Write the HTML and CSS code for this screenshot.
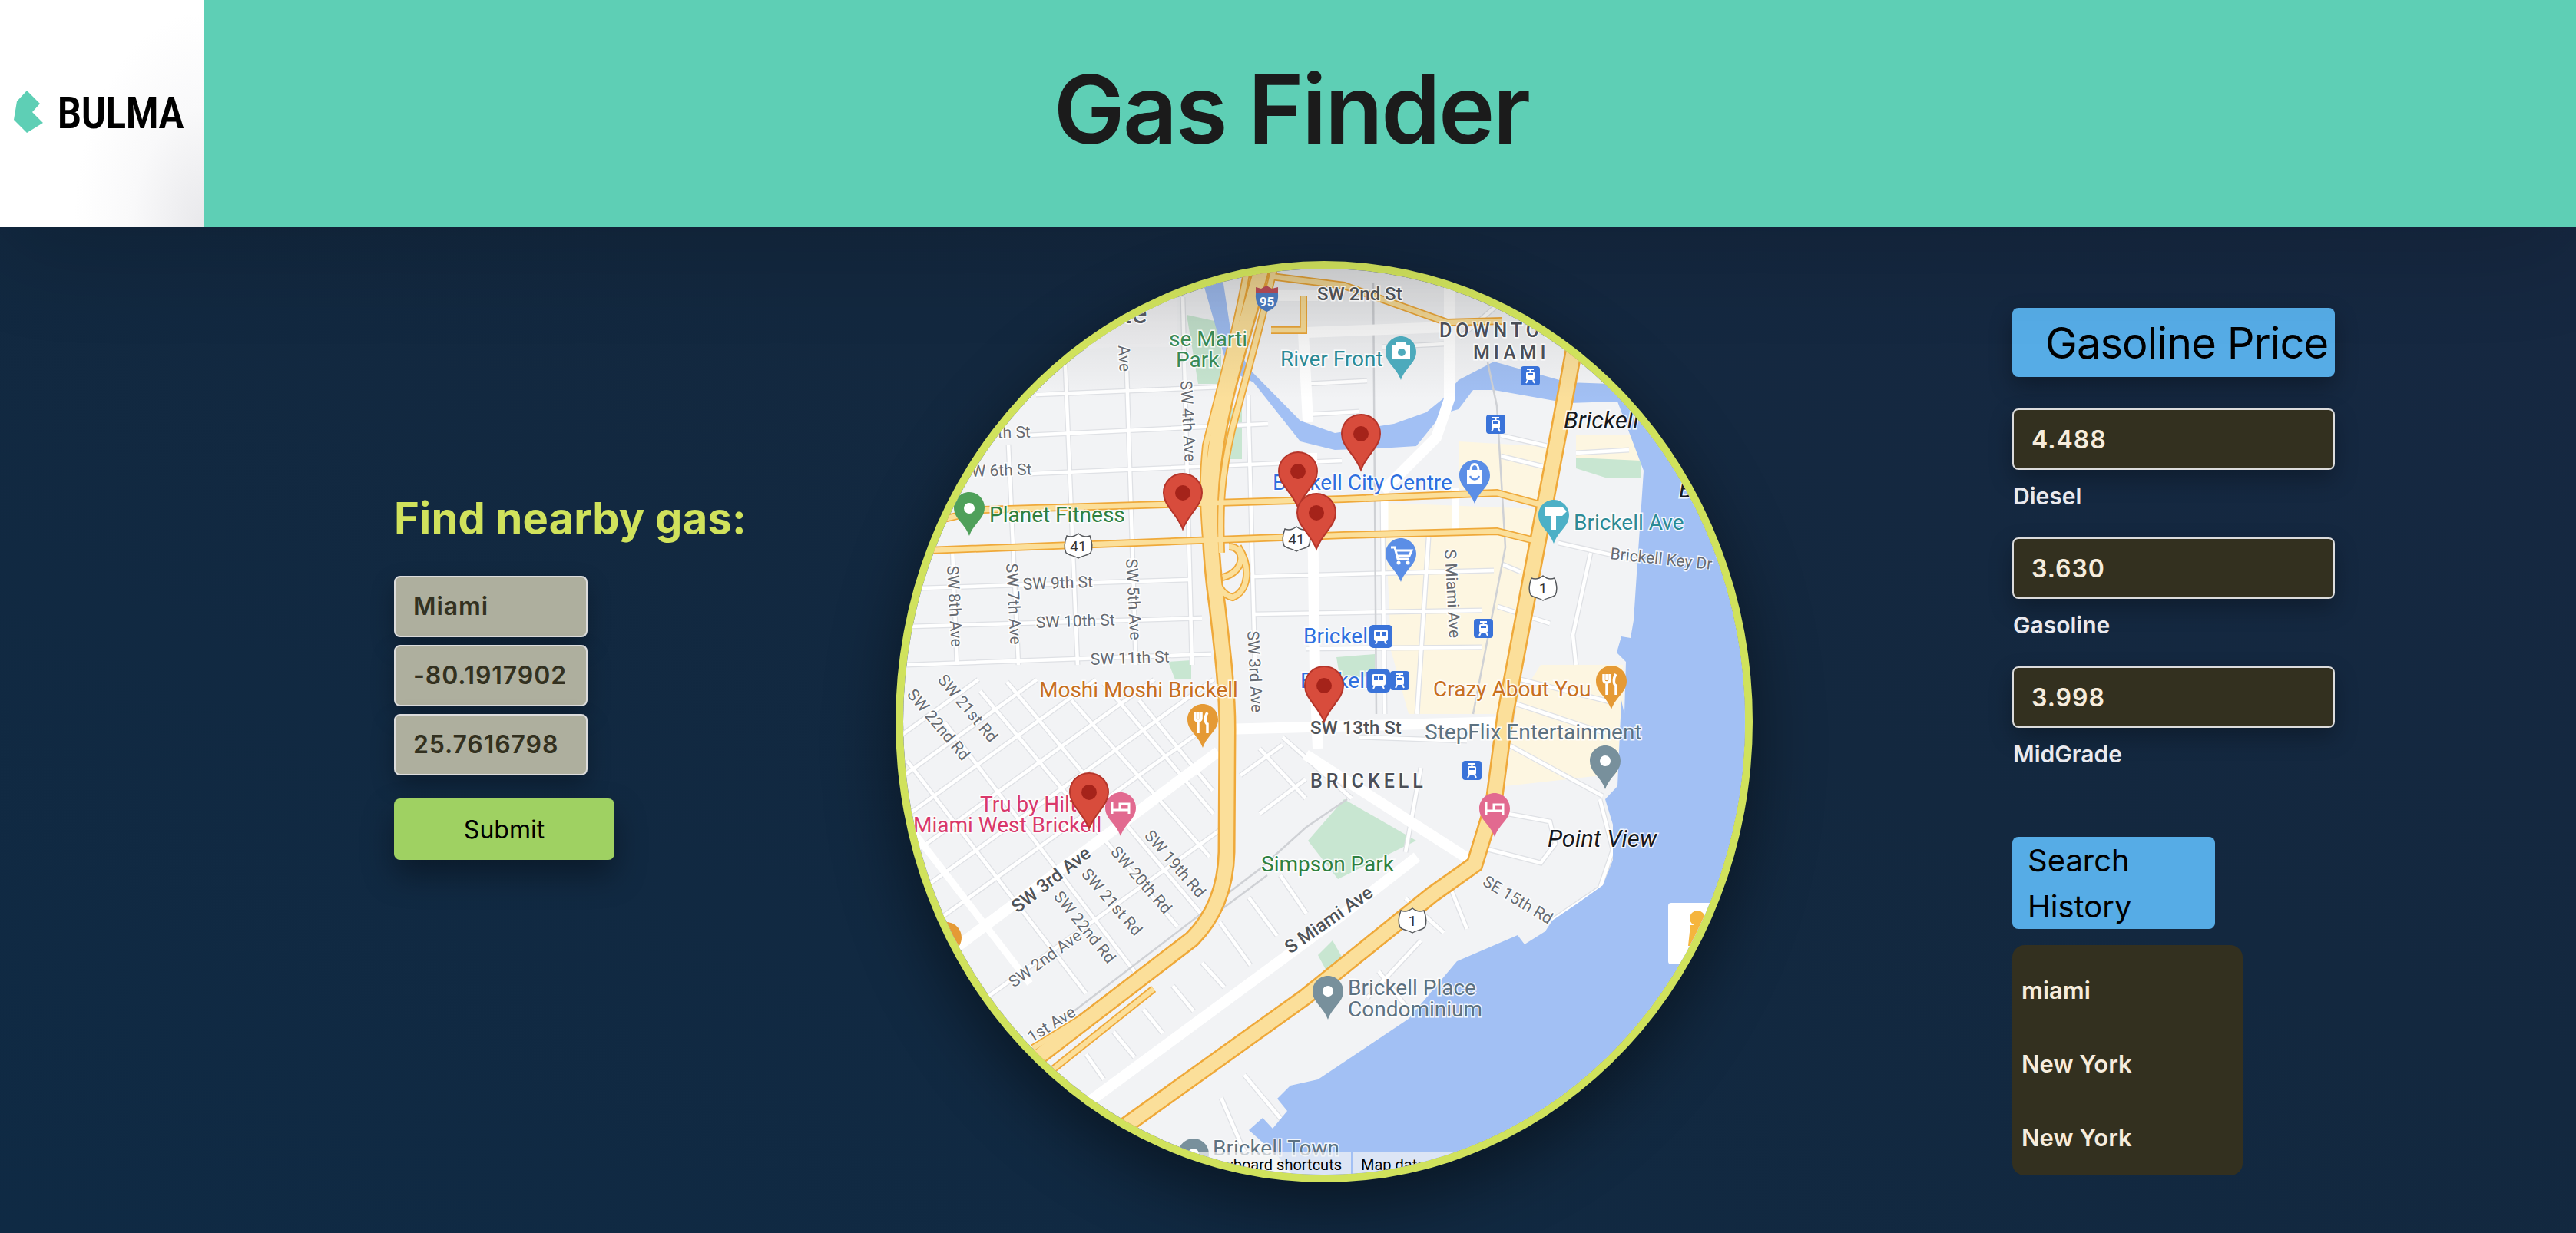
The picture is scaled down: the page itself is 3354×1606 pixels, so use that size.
FILE: index.html
```html
<!DOCTYPE html>
<html lang="en">
<head>
    <meta charset="UTF-8">
    <meta name="viewport" content="width=device-width, initial-scale=1.0">
    <title>Gas Finder</title>
    <link rel="stylesheet" href="styles.css">
</head>
<body>
    <header class="topbar">
        <div class="logo">
            <svg class="logo-svg" viewBox="18 110 225 70" width="225" height="70">
                <polygon class="logo-mark" points="35,118 52,135 42,146 56,160 35,173 18,156 22,132"/>
                <text class="logo-text" transform="translate(75 167) scale(0.835 1)">BULMA</text>
            </svg>
        </div>
        <h1 class="title">Gas Finder</h1>
    </header>

    <main class="page">
        <section class="search">
            <h2 class="search-title">Find nearby gas:</h2>
            <div class="search-input">Miami</div>
            <div class="search-input">-80.1917902</div>
            <div class="search-input">25.7616798</div>
            <button class="submit">Submit</button>
        </section>

        <div class="map">
            <svg class="map-svg" viewBox="1176 350 1096 1180" width="1096" height="1180">
                <defs>
                    <linearGradient id="top-fade" x1="0" y1="0" x2="0" y2="1">
                        <stop offset="0" stop-color="#000" stop-opacity="0.13"/>
                        <stop offset="1" stop-color="#000" stop-opacity="0"/>
                    </linearGradient>
                    <g id="streets">
                        <path d="M1240 713L1246 866M1313 579L1326 866M1387 475L1403 866M1467 483L1479 866M1540 387L1552 866M1625 514L1634 866"/>
                        <path d="M1349 514L1590 504M1337 567L1651 552M1341 617L1747 600M1200 766L1548 755M1184 816L1565 805M1181 866L1577 852"/>
                        <path d="M1632 751L1945 743M1632 800L1930 795M1700 845L1930 843M1700 500L1780 496M1700 540L1770 536"/>
                        <path d="M1181 991L1414 1294M1230 941L1483 1273M1276 900L1533 1207M1311 888L1571 1199M1395 912L1575 1116M1437 890L1580 1060M1483 912L1579 1030"/>
                        <path d="M1170 960L1274 885M1170 1015L1350 885M1170 1070L1427 885M1170 1125L1503 885M1170 1180L1580 885M1170 1235L1590 933M1200 1360L1590 1080"/>
                        <path d="M1414 1373L1437 1406M1450 1344L1477 1377M1489 1315L1514 1346M1527 1284L1554 1317M1565 1254L1594 1286M1588 1201L1628 1257M1626 1169L1663 1219M1667 1140L1701 1190"/>
                        <path d="M1640 975L1700 1040M1670 960L1760 1040M1615 1010L1670 970M1640 1060L1700 1015"/>
                        <path d="M1800 652L1803 930M1895 636L1895 694M1860 700L1845 930M1954 567L2037 586M1954 594L2031 613M2052 590L2121 586"/>
                        <path d="M2029 707L2130 730L2236 726M2071 720L2048 827L2052 866M1964 970L2087 1037M1933 1105L2006 1124L2025 1099L2018 1070L1964 1060"/>
                        <path d="M1956 735L1980 745M1950 790L2018 812M1960 880L2100 915M1960 912L2090 955M1975 900L1950 1030M1850 1000L1830 1110M1770 960L1910 965"/>
                        <path d="M1890 1160L1910 1210M1830 1170L1880 1215M1780 1300L1850 1225M1795 1265L1830 1310M1620 1400L1670 1460M1590 1430L1620 1500"/>
                        <path d="M2083 1041L2100 1107L2083 1157L2021 1199M1900 440L1970 380M1800 452L1880 448"/>
                    </g>
                    <g id="hwy-wide">
                        <path d="M1644 345C1620 430 1590 520 1582 590C1572 650 1575 720 1585 790C1592 850 1598 900 1598 950L1597 1110C1596 1150 1585 1190 1552 1223L1350 1378"/>
                        <path d="M2052 440L2030 560L1992 760L1960 930L1945 1045L1920 1126L1865 1165L1700 1298L1460 1470"/>
                    </g>
                    <g id="hwy-thin">
                        <path d="M1660 345C1640 430 1620 500 1604 560C1590 620 1588 660 1590 720"/>
                        <path d="M1625 345C1610 430 1590 500 1570 580C1566 620 1566 650 1570 700"/>
                        <path d="M1280 664L1750 650L1949 642L2012 659"/>
                        <path d="M1180 718L1750 697L1949 692L2010 707"/>
                        <path d="M1600 712C1622 712 1622 745 1592 752M1612 712C1630 740 1625 770 1605 778C1590 775 1585 760 1580 745"/>
                        <path d="M1470 1288L1345 1365M1502 1288L1372 1392"/>
                        <path d="M1655 360L1750 372L1884 420L1956 418M1655 430L1697 430L1697 385M1212 718L1212 680L1280 664"/>
                    </g>
                    <path id="pin" d="M26 1C40 1 51 12 51 26C51 43 34 52 26 73C18 52 1 43 1 26C1 12 12 1 26 1Z"/>
                    <path id="drop" d="M20 0C31 0 40 9 40 20C40 35 26 40 20 57C14 40 0 35 0 20C0 9 9 0 20 0Z"/>
                    <path id="shield" d="M3 4C8 6 13 5 18 1C23 5 28 6 33 4C36 12 37 20 34 26C30 30 24 29 18 33C12 29 6 30 2 26C-1 20 0 12 3 4Z"/>
                    <g id="tram">
                        <rect class="transit-box" width="25" height="25" rx="4"/>
                        <rect class="transit-ico" x="7" y="7" width="11" height="11" rx="2"/>
                        <rect class="transit-box" x="9" y="9" width="7" height="3"/>
                        <path class="transit-line" d="M8 4H17M12.500 4V7M9 18L7 22M16 18L18 22"/>
                    </g>
                    <g id="train">
                        <rect class="transit-box" width="30" height="30" rx="5"/>
                        <rect class="transit-ico" x="6" y="6" width="18" height="15" rx="3"/>
                        <rect class="transit-box" x="9" y="9" width="5" height="5"/>
                        <rect class="transit-box" x="16" y="9" width="5" height="5"/>
                        <path class="transit-line" d="M10 21L8 25M20 21L22 25"/>
                    </g>
                </defs>

                <rect class="land" x="1176" y="350" width="1096" height="1180"/>

                <polygon class="tile" points="1176,350 1533,350 1533,452 1450,452 1176,470"/>

                <polygon class="cream" points="1899,575 2037,583 2014,655 1899,636"/>
                <polygon class="cream" points="1803,655 2006,663 1964,930 1834,930 1811,847"/>
                <polygon class="cream" points="2052,567 2136,567 2134,606 2052,600"/>
                <polygon class="cream" points="1976,912 2111,912 2106,1008 2067,1012 1960,1024"/>
                <polygon class="cream" points="2006,866 2113,866 2113,930 1965,930"/>

                <polygon class="park" points="1750,1041 1844,1095 1742,1145 1703,1095"/>
                <polygon class="park" points="1545,410 1590,420 1590,500 1560,500"/>
                <polygon class="park" points="1590,533 1617,530 1617,598 1590,598"/>
                <polygon class="park" points="1740,856 1790,852 1790,880 1745,885"/>
                <polygon class="park" points="1716,1244 1735,1225 1755,1260 1730,1270"/>
                <polygon class="park" points="1521,862 1551,860 1551,885 1530,885"/>
                <polygon class="park" points="2052,596 2136,600 2136,622 2090,622 2052,610"/>

                <use href="#streets" class="street-casing"/>
                <use href="#streets" class="street"/>

                <path class="road-big" d="M1697 433L1703 550"/>

                <polygon class="water" points="1561,350 1590,350 1602,429 1625,479 1693,548 1738,564 1815,552 1857,537 1878,520 1899,495 1945,471 2041,498 2098,500 2113,518 2159,575 2290,575 2290,1540 1690,1540 1663,1505 1626,1472 1644,1456 1657,1470 1676,1447 1663,1431 1680,1414 1716,1406 1834,1327 1897,1252 1976,1218 1985,1230 2012,1213 2021,1199 2052,1178 2087,1153 2100,1120 2100,1074 2090,1041 2106,1024 2111,912 2115,930 2117,862 2105,850 2111,829 2123,831 2127,808 2132,732 2136,674 2140,613 2106,523 2041,525 1945,508 1918,508 1899,533 1878,539 1844,581 1796,584 1738,586 1693,575 1632,498 1602,483 1594,464"/>

                <path class="rail" d="M1937 472L1949 529L1960 713L1918 930M1788 368L1792 930M1380 1331L1640 1132L1700 1078L1754 1041M1394 1331L1650 1140"/>

                <path class="road-big" d="M1190 1275L1586 979M1590 950L1965 940M1700 983L1914 1120M1418 1435L1750 1190L1845 1116M1615 385L1716 385M1700 433L1884 426M1887 355L1887 520L1870 570L1800 640M1708 590L1712 880L1716 975"/>
                <path class="road-mid" d="M1803 652L1803 700M1895 636L1895 694M1188 1082L1341 1281"/>

                <use href="#hwy-wide" class="hwy-wide-casing"/>
                <use href="#hwy-thin" class="hwy-thin-casing"/>
                <use href="#hwy-wide" class="hwy-wide"/>
                <use href="#hwy-thin" class="hwy-thin"/>

                <rect class="top-fade" x="1176" y="350" width="1096" height="170"/>

                <text class="t tile-text" x="1461" y="421">te</text>

                <text class="t poi green" x="1624" y="451" text-anchor="end">se Marti</text>
                <text class="t poi green" x="1531" y="478">Park</text>
                <text class="t poi fit" x="1288" y="680">Planet Fitness</text>
                <text class="t poi teal" x="1667" y="477">River Front</text>
                <text class="t poi blue" x="1657" y="638">Brickell City Centre</text>
                <text class="t poi teal" x="2049" y="690">Brickell Ave</text>
                <text class="t poi blue" x="1697" y="838">Brickell</text>
                <text class="t poi blue" x="1693" y="896">Brickell</text>
                <text class="t poi orange" x="1353" y="908">Moshi Moshi Brickell</text>
                <text class="t poi orange" x="1866" y="907">Crazy About You</text>
                <text class="t poi slate" x="1855" y="963">StepFlix Entertainment</text>
                <text class="t poi fit" x="1642" y="1135">Simpson Park</text>
                <text class="t poi pink" x="1276" y="1057">Tru by Hilton</text>
                <text class="t poi pink" x="1189" y="1084">Miami West Brickell</text>
                <text class="t poi slate" x="1755" y="1296">Brickell Place</text>
                <text class="t poi slate" x="1755" y="1324">Condominium</text>
                <text class="t poi slate" x="1579" y="1505">Brickell Town</text>

                <text class="t hood" x="1874" y="439">DOWNTOWN</text>
                <text class="t hood" x="1918" y="468">MIAMI</text>
                <text class="t hood" x="1706" y="1026">BRICKELL</text>
                <text class="t place" x="2036" y="558">Brickell</text>
                <text class="t place" x="2015" y="1103">Point View</text>
                <text class="t place" x="2186" y="648">B</text>

                <text class="t road-name" x="1715" y="391">SW 2nd St</text>
                <text class="t road-name" x="1706" y="956">SW 13th St</text>
                <text class="t road-name" x="1325" y="1190" transform="rotate(-38 1325 1190)">SW 3rd Ave</text>
                <text class="t street-label" x="1299" y="571" transform="rotate(-2 1299 571)">th St</text>
                <text class="t street-label" x="1265" y="621" transform="rotate(-2 1265 621)">W 6th St</text>
                <text class="t street-label" x="1332" y="768" transform="rotate(-2 1332 768)">SW 9th St</text>
                <text class="t street-label" x="1349" y="818" transform="rotate(-2 1349 818)">SW 10th St</text>
                <text class="t street-label" x="1420" y="866" transform="rotate(-2 1420 866)">SW 11th St</text>
                <text class="t street-label" x="1233" y="737" transform="rotate(87 1233 737)">SW 8th Ave</text>
                <text class="t street-label" x="1310" y="734" transform="rotate(87 1310 734)">SW 7th Ave</text>
                <text class="t street-label" x="1466" y="728" transform="rotate(87 1466 728)">SW 5th Ave</text>
                <text class="t street-label" x="1537" y="496" transform="rotate(87 1537 496)">SW 4th Ave</text>
                <text class="t street-label" x="1456" y="450" transform="rotate(87 1456 450)">Ave</text>
                <text class="t street-label" x="1624" y="822" transform="rotate(87 1624 822)">SW 3rd Ave</text>
                <text class="t street-label" x="1881" y="716" transform="rotate(87 1881 716)">S Miami Ave</text>
                <text class="t street-label" x="2096" y="728" transform="rotate(6 2096 728)">Brickell Key Dr</text>
                <text class="t street-label" x="1371" y="1168" transform="rotate(51 1371 1168)">SW 22nd Rd</text>
                <text class="t street-label" x="1407" y="1139" transform="rotate(49 1407 1139)">SW 21st Rd</text>
                <text class="t street-label" x="1445" y="1110" transform="rotate(49 1445 1110)">SW 20th Rd</text>
                <text class="t street-label" x="1489" y="1089" transform="rotate(49 1489 1089)">SW 19th Rd</text>
                <text class="t street-label" x="1180" y="905" transform="rotate(50 1180 905)">SW 22nd Rd</text>
                <text class="t street-label" x="1220" y="886" transform="rotate(50 1220 886)">SW 21st Rd</text>
                <text class="t street-label" x="1320" y="1287" transform="rotate(-36 1320 1287)">SW 2nd Ave</text>
                <text class="t street-label" x="1402" y="1322" text-anchor="end" transform="rotate(-32 1402 1322)">SW 1st Ave</text>
                <text class="t road-name" x="1680" y="1243" transform="rotate(-35 1680 1243)">S Miami Ave</text>
                <text class="t street-label" x="1929" y="1152" transform="rotate(31 1929 1152)">SE 15th Rd</text>

                <use href="#shield" class="shield" x="1386" y="694"/>
                <text class="shield-text" x="1404" y="718">41</text>
                <use href="#shield" class="shield" x="1670" y="685"/>
                <text class="shield-text" x="1688" y="709">41</text>
                <use href="#shield" class="shield" x="1991" y="749"/>
                <text class="shield-text" x="2009" y="773">1</text>
                <use href="#shield" class="shield" x="1821" y="1182"/>
                <text class="shield-text" x="1839" y="1206">1</text>
                <path class="i95-top" d="M1635 382L1635 374L1642 376L1649 372L1656 376L1664 374L1664 382Z"/>
                <path class="i95" d="M1635 382H1664C1665 395 1660 402 1649.500 406C1639 402 1634 395 1635 382Z"/>
                <text class="i95-text" x="1649.500" y="399">95</text>

                <use href="#drop" class="drop d-green" x="1242" y="641"/>
                <circle class="drop-dot" cx="1262" cy="662" r="7"/>

                <use href="#drop" class="drop d-teal" x="1804" y="438"/>
                <path class="drop-ico" d="M1813 450H1818V446H1830L1832 450H1836V468H1813Z"/>
                <circle class="d-teal" cx="1825" cy="459" r="5"/>

                <use href="#drop" class="drop d-shop" x="1900" y="599"/>
                <rect class="drop-ico" x="1910" y="612" width="20" height="18"/>
                <path class="bag-line" d="M1915 612C1915 602 1925 602 1925 612"/>
                <path class="bag-smile" d="M1914 620C1917 626 1923 626 1926 620"/>

                <use href="#drop" class="drop d-shop" x="1804" y="701"/>
                <path class="cart" d="M1811 713H1816L1820 728H1834M1817 717H1838L1835 724H1819"/>
                <circle class="drop-dot" cx="1821" cy="733" r="2.500"/>
                <circle class="drop-dot" cx="1833" cy="733" r="2.500"/>

                <use href="#drop" class="drop d-sign" x="2003" y="651"/>
                <path class="drop-ico" d="M2021 660H2034L2040 666L2034 672H2026V690H2020V672H2012V660H2020Z"/>

                <use href="#drop" class="drop d-orange" x="2078" y="867"/>
                <path class="fork" d="M2092 878V886M2088 878V886C2088 890 2096 890 2096 886V878M2092 888V905M2104 878C2100 884 2101 892 2104 893V905"/>

                <use href="#drop" class="drop d-orange" x="1546" y="917"/>
                <path class="fork" d="M1560 928V936M1556 928V936C1556 940 1564 940 1564 936V928M1560 938V955M1572 928C1568 934 1569 942 1572 943V955"/>

                <use href="#drop" class="drop d-orange" x="1212" y="1201"/>

                <use href="#drop" class="drop d-gray" x="2070" y="971"/>
                <circle class="drop-dot" cx="2090" cy="991" r="7"/>
                <use href="#drop" class="drop d-gray" x="1709" y="1271"/>
                <circle class="drop-dot" cx="1729" cy="1291" r="7"/>
                <use href="#drop" class="drop d-gray" x="1534" y="1483"/>
                <circle class="drop-dot" cx="1554" cy="1503" r="7"/>

                <use href="#drop" class="drop d-pink" x="1439" y="1032"/>
                <path class="bed" d="M1448 1044V1060M1448 1055H1470V1060M1470 1055V1047H1458V1055"/>
                <use href="#drop" class="drop d-pink" x="1926" y="1033"/>
                <path class="bed" d="M1935 1045V1061M1935 1056H1957V1061M1957 1056V1048H1945V1056"/>

                <use href="#tram" x="1980" y="477"/>
                <use href="#tram" x="1935" y="540"/>
                <use href="#tram" x="1810" y="874"/>
                <use href="#tram" x="1919" y="806"/>
                <use href="#tram" x="1904" y="991"/>
                <use href="#train" x="1783" y="814"/>
                <use href="#train" x="1780" y="872"/>

                <use href="#pin" class="pin" x="1514" y="616"/>
                <circle class="pin-dot" cx="1540" cy="642" r="10"/>
                <use href="#pin" class="pin" x="1664" y="588"/>
                <circle class="pin-dot" cx="1690" cy="614" r="10"/>
                <use href="#pin" class="pin" x="1688" y="642"/>
                <circle class="pin-dot" cx="1714" cy="668" r="10"/>
                <use href="#pin" class="pin" x="1746" y="539"/>
                <circle class="pin-dot" cx="1772" cy="565" r="10"/>
                <use href="#pin" class="pin" x="1698" y="867"/>
                <circle class="pin-dot" cx="1724" cy="893" r="10"/>
                <use href="#pin" class="pin" x="1392" y="1006"/>
                <circle class="pin-dot" cx="1418" cy="1032" r="10"/>

                <rect class="pegman-box" x="2172" y="1176" width="90" height="80" rx="4"/>
                <circle class="pegman" cx="2210" cy="1196" r="10"/>
                <path class="pegman" d="M2201 1205H2220L2222 1232H2198Z"/>

                <rect class="attrib" x="1500" y="1501" width="259" height="30"/>
                <rect class="attrib" x="1761" y="1501" width="200" height="30"/>
                <text class="attrib-text" x="1747" y="1524" text-anchor="end">Keyboard shortcuts</text>
                <text class="attrib-text" x="1772" y="1524">Map data ©2022</text>
            </svg>
        </div>

        <aside class="prices">
            <div class="panel-head price-head">Gasoline Price</div>
            <div class="price">4.488</div>
            <p class="price-label">Diesel</p>
            <div class="price">3.630</div>
            <p class="price-label">Gasoline</p>
            <div class="price">3.998</div>
            <p class="price-label">MidGrade</p>

            <div class="panel-head history-head">Search History</div>
            <ul class="history">
                <li>miami</li>
                <li>New York</li>
                <li>New York</li>
            </ul>
        </aside>
    </main>
</body>
</html>
```

FILE: styles.css
```css
html, body {
    margin: 0;
    height: 1606px;
    overflow: hidden;
}

body {
    font-family: Inter, "Liberation Sans", sans-serif;
    background: linear-gradient(205deg, #172842 0%, #13283f 45%, #0f2a44 100%);
}

.topbar {
    position: relative;
    z-index: 2;
    display: grid;
    grid-template-columns: 266px 1fr 258px;
    height: 296px;
    background-color: #5ecfb5;
    box-shadow: 0 30px 130px rgba(0, 0, 0, 0.16);
}

.logo {
    display: flex;
    align-items: center;
    padding-left: 18px;
    background: radial-gradient(ellipse 170px 280px at 100% 100%, #e8e8eb 0%, #f9f9fa 55%, #fff 100%);
}

.logo-svg {
    margin-top: -6px;
}

.logo-mark {
    fill: #5ecfb5;
}

.logo-text {
    font-family: Roboto, sans-serif;
    font-size: 58px;
    font-weight: 700;
    fill: #000;
}

.title {
    margin: 0;
    text-align: center;
    font-size: 124px;
    font-weight: 600;
    line-height: 284px;
    letter-spacing: -2.600px;
    color: #1b1b1b;
}

.page {
    display: grid;
    grid-template-columns: 653px 1116px 1fr;
    padding-left: 513px;
}

/* left column */
.search {
    padding-top: 346px;
}

.search-title {
    margin: 0 0 41px;
    font-size: 56px;
    font-weight: 700;
    line-height: 67px;
    letter-spacing: 0.200px;
    white-space: nowrap;
    color: #d0e25c;
}

.search-input {
    box-sizing: border-box;
    width: 252px;
    height: 80px;
    margin-bottom: 10px;
    padding-left: 23px;
    border: 2px solid #dcdcdc;
    border-radius: 8px;
    font-size: 32px;
    font-weight: 600;
    line-height: 76px;
    letter-spacing: 0.900px;
    color: #333120;
    background-color: #aeaf9e;
    box-shadow: 0 12px 30px rgba(0, 0, 0, 0.28);
}

.submit {
    display: block;
    width: 287px;
    height: 80px;
    margin-top: 30px;
    padding: 0;
    border: none;
    border-radius: 8px;
    font-family: inherit;
    font-size: 32px;
    color: #000;
    background-color: #9fd162;
    box-shadow: 0 20px 40px rgba(0, 0, 0, 0.35);
}

/* map */
.map {
    box-sizing: border-box;
    width: 1116px;
    height: 1200px;
    margin-top: 44px;
    border: 10px solid #d0e25c;
    border-radius: 50%;
    overflow: hidden;
    box-shadow: 0 30px 90px rgba(0, 0, 0, 0.45);
}

.map-svg {
    display: block;
}

.land { fill: #f2f3f5; }
.tile { fill: #f5f5f7; }
.cream { fill: #fdf6e1; }
.park { fill: #c8e6d1; }
.water { fill: #a2c0f4; }
.top-fade { fill: url(#top-fade); }

.street-casing, .street, .road-big, .road-mid, .rail,
.hwy-wide-casing, .hwy-thin-casing, .hwy-wide, .hwy-thin {
    fill: none;
}

.street-casing { stroke: #dfe1e5; stroke-width: 7px; }
.street { stroke: #fff; stroke-width: 4.500px; }
.road-big { stroke: #fff; stroke-width: 14px; }
.road-mid { stroke: #fff; stroke-width: 9px; }
.rail { stroke: #cfd1d5; stroke-width: 2.500px; }

.hwy-wide-casing { stroke: #efa93a; stroke-width: 23px; }
.hwy-wide { stroke: #fbdf9a; stroke-width: 18px; }
.hwy-thin-casing { stroke: #efa93a; stroke-width: 10px; }
.hwy-thin { stroke: #fbdf9a; stroke-width: 6.500px; }

.t {
    font-family: Roboto, sans-serif;
    paint-order: stroke;
    stroke: #fff;
    stroke-width: 3px;
    stroke-opacity: 0.85;
}

.poi { font-size: 28px; }
.green { fill: #3a8a55; }
.fit { fill: #2f8040; }
.teal { fill: #2b8a96; }
.blue { fill: #2f6fdf; }
.orange { fill: #c8701f; }
.slate { fill: #5c7282; }
.pink { fill: #d9386a; }

.hood {
    font-size: 25px;
    font-weight: 500;
    letter-spacing: 5px;
    fill: #4b4f58;
}

.place {
    font-size: 31px;
    font-style: italic;
    fill: #15181d;
}

.road-name {
    font-size: 24px;
    font-weight: 500;
    fill: #4f5358;
}

.street-label {
    font-size: 21px;
    fill: #676b72;
}

.tile-text {
    font-size: 38px;
    fill: #55585f;
}

.shield { fill: #fff; stroke: #55585c; stroke-width: 1.500px; }

.shield-text {
    font-family: Roboto, sans-serif;
    font-size: 19px;
    text-anchor: middle;
    fill: #333;
}

.i95-top { fill: #b04a55; }
.i95 { fill: #4a78bb; }

.i95-text {
    font-family: Roboto, sans-serif;
    font-size: 17px;
    font-weight: 700;
    text-anchor: middle;
    fill: #fff;
}

.d-green { fill: #4fa05a; }
.d-teal { fill: #4daabc; }
.d-shop { fill: #5b8ee6; }
.d-sign { fill: #4db0c6; }
.d-orange { fill: #e59a35; }
.d-gray { fill: #78909c; }
.d-pink { fill: #e26a90; }

.drop-dot, .drop-ico { fill: #fff; }

.bag-line, .cart, .fork, .bed {
    fill: none;
    stroke: #fff;
    stroke-width: 3px;
}

.bag-smile {
    fill: none;
    stroke: #5b8ee6;
    stroke-width: 2.500px;
}

.fork { stroke-width: 3.500px; }

.transit-box { fill: #3a73d9; }
.transit-ico { fill: #fff; }
.transit-line { fill: none; stroke: #fff; stroke-width: 2px; }

.pin { fill: #d84c3c; stroke: #b5352a; stroke-width: 2px; }
.pin-dot { fill: #a5231a; }

.pegman-box { fill: #fff; }
.pegman { fill: #f5b53d; }

.attrib { fill: #f5f5f5; fill-opacity: 0.7; }

.attrib-text {
    font-family: Roboto, sans-serif;
    font-size: 20px;
    fill: #000;
}

/* right column */
.prices {
    padding: 105px 0 0 338px;
}

.panel-head {
    box-sizing: border-box;
    border-radius: 8px;
    color: #000;
    background-color: #56ace6;
}

.price-head {
    width: 420px;
    height: 90px;
    margin-bottom: 41px;
    padding-left: 43px;
    font-size: 56px;
    line-height: 92px;
    letter-spacing: -0.900px;
    white-space: nowrap;
    box-shadow: 0 12px 30px rgba(0, 0, 0, 0.3);
}

.price {
    box-sizing: border-box;
    width: 420px;
    height: 80px;
    padding-left: 23px;
    border: 2px solid #dcdcdc;
    border-radius: 8px;
    font-size: 32px;
    font-weight: 600;
    line-height: 77px;
    letter-spacing: 1px;
    color: #f6ecdc;
    background-color: #33301f;
    box-shadow: 0 12px 30px rgba(0, 0, 0, 0.28);
}

.price-label {
    margin: 14px 0 34px;
    padding-left: 1px;
    font-size: 30px;
    font-weight: 600;
    line-height: 40px;
    color: #e9e9ee;
}

.history-head {
    width: 264px;
    height: 120px;
    margin: 88px 0 21px;
    padding: 1px 60px 0 20px;
    font-size: 40px;
    line-height: 60px;
}

.history {
    box-sizing: border-box;
    width: 300px;
    height: 300px;
    margin: 0;
    padding: 11px 0 0 12px;
    border-radius: 16px;
    list-style: none;
    background-color: #33301f;
}

.history li {
    font-size: 31px;
    font-weight: 600;
    line-height: 96px;
    color: #f6ecdc;
}
```
